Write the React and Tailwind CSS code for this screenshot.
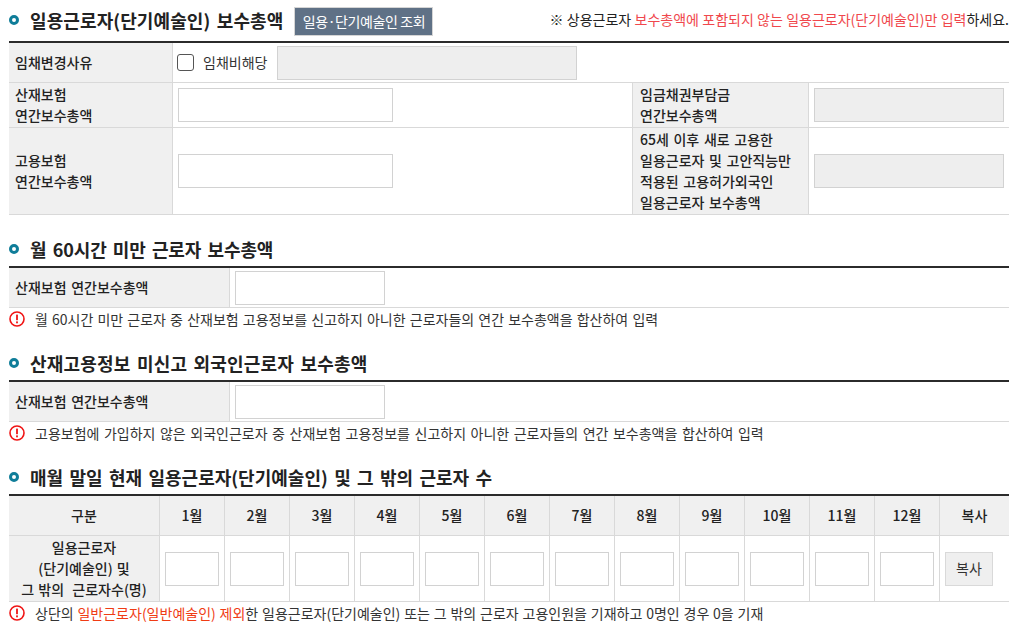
const months = ['1월', '2월', '3월', '4월', '5월', '6월', '7월', '8월', '9월', '10월', '11월', '12월'];

const labelCell = 'bg-[#f0f0f0] border-b border-r border-[#d9d9d9] pl-[6px] text-left align-middle font-medium leading-[21px] text-[#222] [word-spacing:1.5px]';
const inputCell = 'border-b border-[#d9d9d9] align-middle';
const inputBox = 'block h-[34px] border border-[#d2d2d2] bg-white';
const disabledBox = 'block h-[34px] border border-[#d2d2d2] bg-[#eeeeee]';
const titleText = 'ml-[11px] text-[18px] leading-[24px] font-bold text-[#222] whitespace-nowrap [word-spacing:2.2px]';

function SectionTitle({ children, className = '', tracking = 'tracking-[0.02px]' }) {
  return (
    <div className={`flex items-center h-[34px] pb-[2px] border-b-2 border-[#2b2b2b] ${className}`}>
      <span className="w-[10px] h-[10px] rounded-full border-[3px] border-[#0f7d99] bg-white shrink-0" />
      <h2 className={`${titleText} ${tracking}`}>{children}</h2>
    </div>
  );
}

function Note({ children, spacing = '[word-spacing:1px]' }) {
  return (
    <div className={`flex items-center h-[24px] pb-[2px] text-[14px] text-[#333] whitespace-nowrap ${spacing}`}>
      <svg width="16" height="16" viewBox="0 0 16 16" className="shrink-0">
        <circle cx="8" cy="8" r="7" fill="white" stroke="#f01414" strokeWidth="1.6" />
        <rect x="7.1" y="3.6" width="1.8" height="5.6" fill="#f01414" />
        <rect x="7.1" y="10.4" width="1.8" height="1.9" fill="#f01414" />
      </svg>
      <p className="ml-[10px]">{children}</p>
    </div>
  );
}

function SingleRow() {
  return (
    <table className="w-full table-fixed border-separate border-spacing-0 text-[14px]">
      <tbody>
        <tr className="h-[40px]">
          <th className={`w-[221px] ${labelCell}`}>산재보험 연간보수총액</th>
          <td className={`${inputCell} pl-[5px]`}>
            <input type="text" className={`${inputBox} w-[150px]`} />
          </td>
        </tr>
      </tbody>
    </table>
  );
}

export default function App() {
  return (
    <div
      className="w-[1035px] h-[633px] overflow-hidden bg-white pl-[9px] pr-[26px] text-[14px] text-[#333]"
      style={{ fontFamily: '"Noto Sans CJK KR", "Noto Sans", sans-serif' }}
    >
      <div className="relative flex items-center h-[43px] pb-[2px] border-b-2 border-[#2b2b2b]">
        <span className="w-[10px] h-[10px] rounded-full border-[3px] border-[#0f7d99] bg-white shrink-0" />
        <h2 className={`${titleText} tracking-[0.1px]`}>일용근로자(단기예술인) 보수총액</h2>
        <button className="ml-[11px] mt-[4px] h-[29px] w-[139px] border border-[#d5d5d5] bg-[#5f7186] text-[14px] text-white whitespace-nowrap tracking-[-0.4px]">
          일용·단기예술인 조회
        </button>
        <p className="ml-auto text-[14px] whitespace-nowrap text-[#222] [word-spacing:0.2px]">
          ※ 상용근로자 <span className="text-[#f0474c]">보수총액에 포함되지 않는 일용근로자(단기예술인)만 입력</span>하세요.
        </p>
      </div>

      <table className="w-full table-fixed border-separate border-spacing-0 text-[14px]">
        <colgroup>
          <col className="w-[164px]" />
          <col className="w-[460px]" />
          <col className="w-[176px]" />
          <col className="w-[200px]" />
        </colgroup>
        <tbody>
          <tr className="h-[40px]">
            <th className={labelCell}>임채변경사유</th>
            <td colSpan={3} className={inputCell}>
              <div className="flex items-center">
                <input type="checkbox" className="ml-[4px] w-[17px] h-[17px] appearance-none rounded-[3px] border border-[#555] bg-white" />
                <span className="ml-[9px] w-[74px] text-[#333]">임채비해당</span>
                <input type="text" disabled className={`${disabledBox} w-[300px]`} />
              </div>
            </td>
          </tr>
          <tr className="h-[45px]">
            <th className={labelCell}>산재보험<br />연간보수총액</th>
            <td className={`${inputCell} border-r pl-[5px]`}>
              <input type="text" className={`${inputBox} w-[215px]`} />
            </td>
            <th className={`${labelCell} pl-[7px]`}>임금채권부담금<br />연간보수총액</th>
            <td className={`${inputCell} pl-[5px]`}>
              <input type="text" disabled className={`${disabledBox} w-[190px]`} />
            </td>
          </tr>
          <tr className="h-[87px]">
            <th className={labelCell}>고용보험<br />연간보수총액</th>
            <td className={`${inputCell} border-r pl-[5px]`}>
              <input type="text" className={`${inputBox} w-[215px]`} />
            </td>
            <th className={`${labelCell} pl-[7px]`}>65세 이후 새로 고용한<br />일용근로자 및 고안직능만<br />적용된 고용허가외국인<br />일용근로자 보수총액</th>
            <td className={`${inputCell} pl-[5px]`}>
              <input type="text" disabled className={`${disabledBox} w-[190px]`} />
            </td>
          </tr>
        </tbody>
      </table>

      <SectionTitle className="mt-[19px]" tracking="tracking-[-0.1px]">월 60시간 미만 근로자 보수총액</SectionTitle>
      <SingleRow />
      <Note>월 60시간 미만 근로자 중 산재보험 고용정보를 신고하지 아니한 근로자들의 연간 보수총액을 합산하여 입력</Note>

      <SectionTitle className="mt-[16px]" tracking="tracking-[0.18px]">산재고용정보 미신고 외국인근로자 보수총액</SectionTitle>
      <SingleRow />
      <Note spacing="[word-spacing:1.4px]">고용보험에 가입하지 않은 외국인근로자 중 산재보험 고용정보를 신고하지 아니한 근로자들의 연간 보수총액을 합산하여 입력</Note>

      <SectionTitle className="mt-[16px]">매월 말일 현재 일용근로자(단기예술인) 및 그 밖의 근로자 수</SectionTitle>
      <table className="w-full table-fixed border-separate border-spacing-0 text-[14px]">
        <colgroup>
          <col className="w-[151px]" />
          {months.map((m) => (
            <col key={m} className="w-[65px]" />
          ))}
          <col className="w-[69px]" />
        </colgroup>
        <thead>
          <tr className="h-[40px]">
            <th className="bg-[#f0f0f0] border-b border-r border-[#d9d9d9] font-medium text-[#222]">구분</th>
            {months.map((m) => (
              <th key={m} className="bg-[#f0f0f0] border-b border-r border-[#d9d9d9] font-medium text-[#222]">{m}</th>
            ))}
            <th className="bg-[#f0f0f0] border-b border-[#d9d9d9] font-medium text-[#222]">복사</th>
          </tr>
        </thead>
        <tbody>
          <tr className="h-[66px]">
            <th className="bg-[#f0f0f0] border-b border-r border-[#d9d9d9] font-medium leading-[21px] text-[#222] [word-spacing:1px]">
              일용근로자<br />(단기예술인) 및<br />그 밖의&nbsp; 근로자수(명)
            </th>
            {months.map((m) => (
              <td key={m} className="border-b border-r border-[#d9d9d9] pl-[5px] align-middle">
                <input type="text" className={`${inputBox} w-[54px]`} />
              </td>
            ))}
            <td className="border-b border-[#d9d9d9] pl-[5px] align-middle">
              <button className="block h-[34px] w-[48px] border border-[#d9d9d9] bg-[#efefef] text-[14px] text-[#333]">복사</button>
            </td>
          </tr>
        </tbody>
      </table>
      <Note spacing="[word-spacing:0.7px]">
        상단의 <span className="text-[#f03c14]">일반근로자(일반예술인) 제외</span>한 일용근로자(단기예술인) 또는 그 밖의 근로자 고용인원을 기재하고 0명인 경우 0을 기재
      </Note>
    </div>
  );
}
